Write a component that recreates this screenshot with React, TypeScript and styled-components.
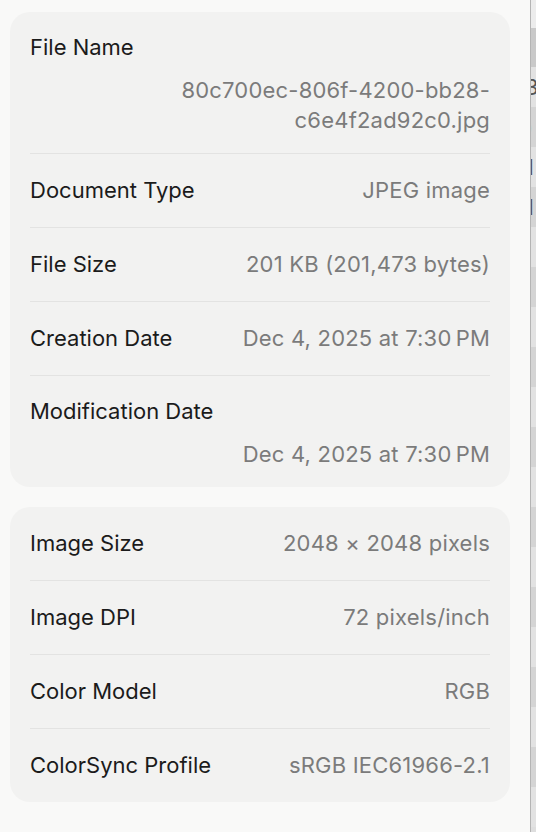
import React, {FC} from 'react';
import styled, {createGlobalStyle} from "styled-components";

type Field = {
    label: string
    value: React.ReactNode
    stacked?: boolean
}

const fileFields: Field[] = [
    {label: 'File Name', value: <>80c700ec-806f-4200-bb28-<br/>c6e4f2ad92c0.jpg</>, stacked: true},
    {label: 'Document Type', value: 'JPEG image'},
    {label: 'File Size', value: '201 KB (201,473 bytes)'},
    {label: 'Creation Date', value: 'Dec 4, 2025 at 7:30\u202FPM'},
    {label: 'Modification Date', value: 'Dec 4, 2025 at 7:30\u202FPM', stacked: true},
]

const imageFields: Field[] = [
    {label: 'Image Size', value: '2048 × 2048 pixels'},
    {label: 'Image DPI', value: '72 pixels/inch'},
    {label: 'Color Model', value: 'RGB'},
    {label: 'ColorSync Profile', value: 'sRGB IEC61966-2.1'},
]

// what peeks out of the window behind the panel
const behindRows = ['3', ')', '1', '1', ':', ':', ':', ':', ':', ':', ':', ':', ':', ':', ':', ':', ':', ':', ':']

const InfoCard: FC<{ fields: Field[] }> = ({fields}) => (
    <Card>
        {fields.map(field => (
            <Row key={field.label} stacked={field.stacked}>
                <Label>{field.label}</Label>
                <Value>{field.value}</Value>
            </Row>
        ))}
    </Card>
)

const App: FC = () => {
    return (
        <>
            <GlobalStyle/>
            <Page>
                <Panel>
                    <InfoCard fields={fileFields}/>
                    <InfoCard fields={imageFields}/>
                </Panel>
                <WindowEdge/>
                <Behind>
                    <BehindTop/>
                    <BehindHeader/>
                    {behindRows.map((ch, i) => (
                        <BehindRow key={i} odd={i % 2 === 1}>
                            <span>{ch}</span>
                        </BehindRow>
                    ))}
                </Behind>
            </Page>
        </>
    );
};

const GlobalStyle = createGlobalStyle`
  html, body {
    margin: 0;
    padding: 0;
    background: #f9f9f8;
    font-family: Inter, "Liberation Sans", sans-serif;
    -webkit-font-smoothing: antialiased;
  }
`

const Page = styled.div`
  display: flex;
  height: 832px;
  width: 536px;
  overflow: hidden;
`

const Panel = styled.div`
  width: 530px;
  flex-shrink: 0;
  box-sizing: border-box;
  padding: 12px 20px 0 10px;
  display: flex;
  flex-direction: column;
  gap: 20px;
`

const Card = styled.div`
  background: #f2f2f1;
  border-radius: 20px;
  padding: 0 20px;
`

const Row = styled.div<{ stacked?: boolean }>`
  display: flex;
  flex-direction: ${p => p.stacked ? 'column' : 'row'};
  justify-content: space-between;
  align-items: ${p => p.stacked ? 'stretch' : 'center'};
  gap: ${p => p.stacked ? '13px' : '16px'};
  padding: ${p => p.stacked ? '20px 0 18px' : '21px 0 22px'};
  border-bottom: 1px solid #e3e3e2;
  font-size: 22px;
  line-height: 30px;

  &:last-child {
    border-bottom: none;
  }
`

const Label = styled.div`
  color: #1b1b1b;
  white-space: nowrap;
`

const Value = styled.div`
  color: #7b7b7b;
  text-align: right;
  white-space: nowrap;
  letter-spacing: 0.2px;
`

const WindowEdge = styled.div`
  width: 1px;
  flex-shrink: 0;
  background: #b4b4b4;
`

const Behind = styled.div`
  flex: 1;
  background: #dedede;
  display: flex;
  flex-direction: column;
  overflow: hidden;
`

const BehindTop = styled.div`
  height: 28px;
  background: #ececec;
`

const BehindHeader = styled.div`
  height: 39px;
  background: #c9c9c9;
`

const BehindRow = styled.div<{ odd?: boolean }>`
  height: 40px;
  flex-shrink: 0;
  display: flex;
  align-items: center;
  background: ${p => p.odd ? '#d4d4d4' : '#e2e2e2'};
  font-size: 22px;
  color: #555;

  span {
    margin-left: -6px;
  }
`

export default App;
